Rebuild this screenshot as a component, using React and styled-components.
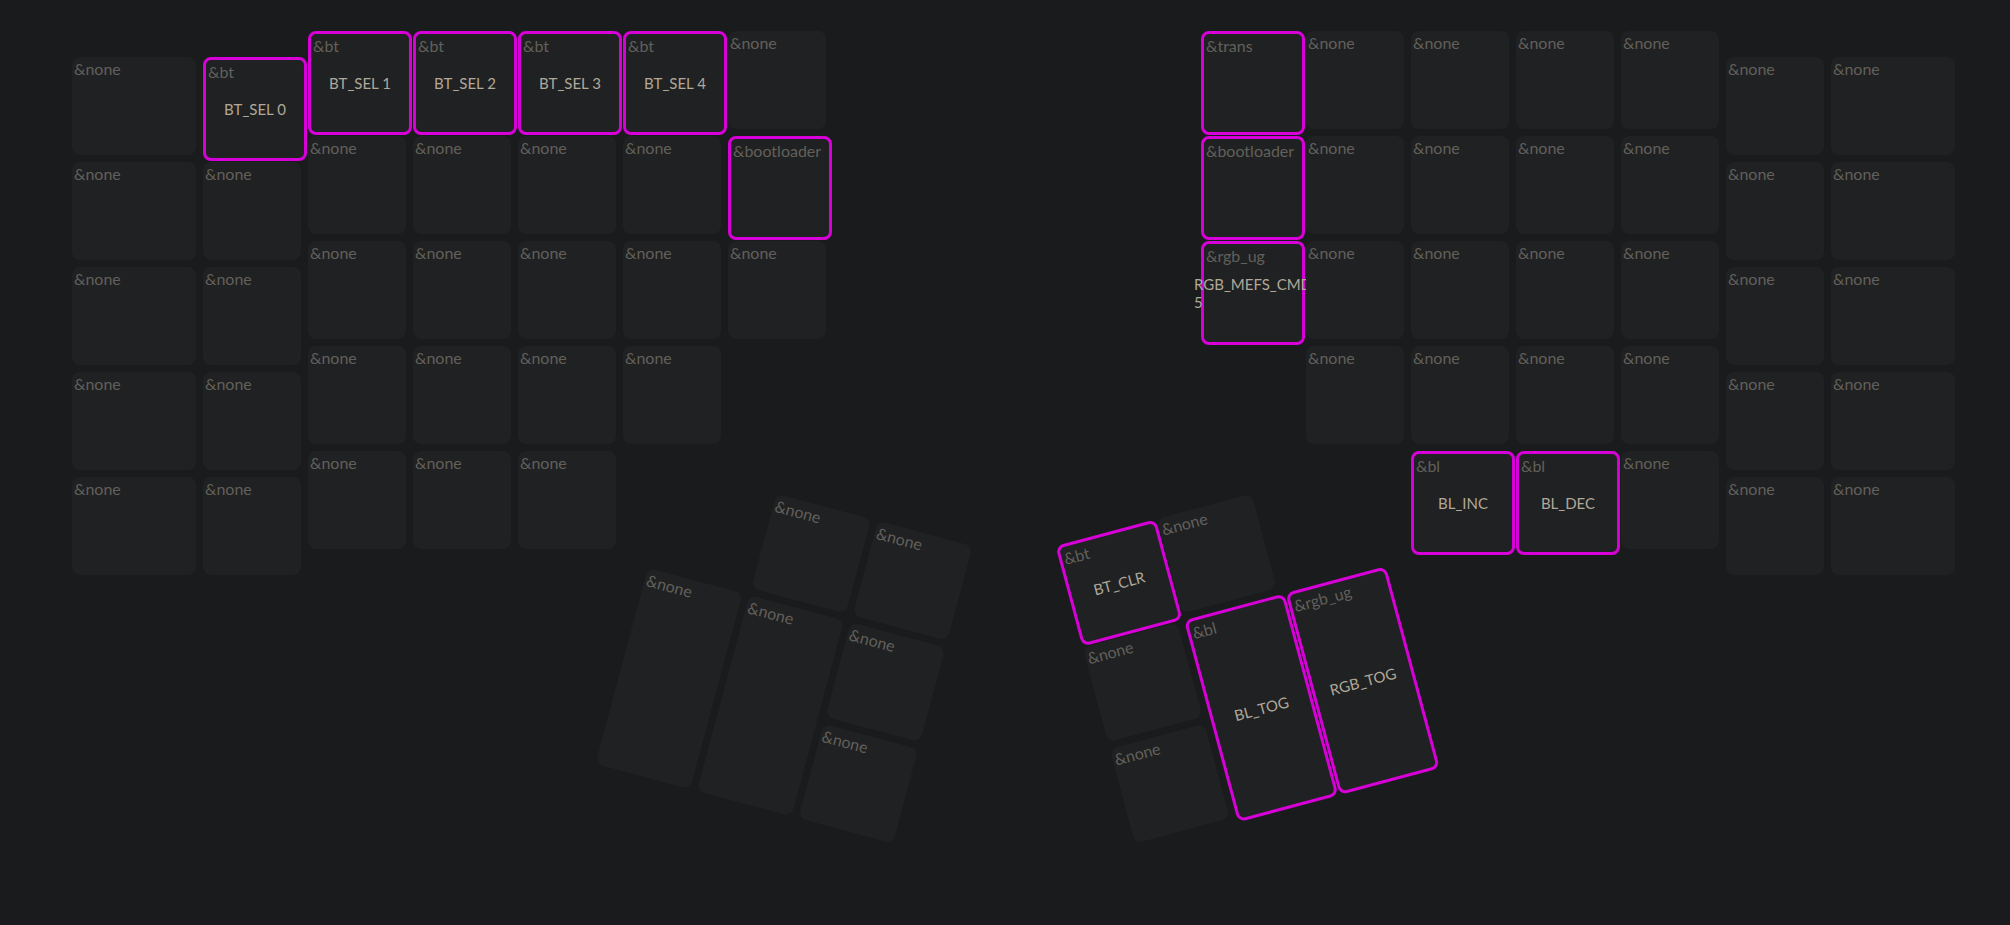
import React from "react";
import styled, { createGlobalStyle } from "styled-components";

const GlobalStyle = createGlobalStyle`
  body {
    margin: 0;
    background: #1a1b1c;
    color: #b0a898;
    font-family: Lato, "Open Sans", sans-serif;
  }
`;

const Page = styled.main`
  display: flex;
  justify-content: center;
  min-height: 100vh;
  box-sizing: border-box;
  padding: 31px 0 31px 17px;
`;

const Board = styled.div`
  display: flex;
  flex: 0 1 1883px;
`;

const Half = styled.section`
  flex: 1;
  display: grid;
  align-items: start;
  justify-items: ${(p) => (p.$side === "left" ? "start" : "end")};
`;

const Columns = styled.div`
  grid-area: 1 / 1;
  display: flex;
  gap: 7px;
`;

const Column = styled.div`
  display: flex;
  flex-direction: column;
  gap: 7px;
  width: ${(p) => (p.$wide ? 124 : 98)}px;
  padding-top: ${(p) => (p.$low ? 26 : 0)}px;
`;

const Cluster = styled.div`
  grid-area: 1 / 1;
  justify-self: ${(p) => (p.$side === "left" ? "end" : "start")};
  display: grid;
  grid-template-columns: repeat(3, 98px);
  grid-template-rows: repeat(3, 98px);
  gap: 7px;
  margin: 470px 76px 0;
  transform: rotate(${(p) => (p.$side === "left" ? 15 : -15)}deg);
`;

const Slot = styled.div`
  position: relative;
  display: grid;
  min-height: 98px;
  grid-area: ${(p) => p.$area || "auto"};
`;

const Cap = styled.button`
  display: grid;
  grid-template: minmax(0, 1fr) / minmax(0, 1fr);
  box-sizing: content-box;
  width: 100%;
  height: 100%;
  padding: 0;
  border: ${(p) => (p.$bound ? "3px solid #d800d8" : "0")};
  border-radius: 8px;
  background: #202122;
  color: inherit;
  font: inherit;
  text-align: left;
  cursor: pointer;
`;

const Behaviour = styled.span`
  grid-area: 1 / 1;
  place-self: start;
  padding: 2px;
  font-size: 16px;
  line-height: 20px;
  color: #62605b;
`;

const Value = styled.span`
  grid-area: 1 / 1;
  place-self: center;
  font-size: 15px;
  line-height: 18px;
`;

function Key({ binding = "none", value, area }) {
  return (
    <Slot $area={area}>
      <Cap type="button" $bound={binding !== "none"}>
        <Behaviour>&amp;{binding}</Behaviour>
        {value && <Value>{value}</Value>}
      </Cap>
    </Slot>
  );
}

const none = {};
const bt = (value) => ({ binding: "bt", value });

const leftColumns = [
  { wide: true, low: true, keys: [none, none, none, none, none] },
  { low: true, keys: [bt("BT_SEL 0"), none, none, none, none] },
  { keys: [bt("BT_SEL 1"), none, none, none, none] },
  { keys: [bt("BT_SEL 2"), none, none, none, none] },
  { keys: [bt("BT_SEL 3"), none, none, none, none] },
  { keys: [bt("BT_SEL 4"), none, none, none] },
  { keys: [none, { binding: "bootloader" }, none] },
];

const rightColumns = [
  {
    keys: [
      { binding: "trans" },
      { binding: "bootloader" },
      { binding: "rgb_ug", value: "RGB_MEFS_CMD 5" },
    ],
  },
  { keys: [none, none, none, none] },
  { keys: [none, none, none, none, { binding: "bl", value: "BL_INC" }] },
  { keys: [none, none, none, none, { binding: "bl", value: "BL_DEC" }] },
  { keys: [none, none, none, none, none] },
  { low: true, keys: [none, none, none, none, none] },
  { wide: true, low: true, keys: [none, none, none, none, none] },
];

const leftThumb = [
  { area: "1 / 2" },
  { area: "1 / 3" },
  { area: "2 / 1 / 4 / 2" },
  { area: "2 / 2 / 4 / 3" },
  { area: "2 / 3" },
  { area: "3 / 3" },
];

const rightThumb = [
  { area: "1 / 1", ...bt("BT_CLR") },
  { area: "1 / 2" },
  { area: "2 / 1" },
  { area: "3 / 1" },
  { area: "2 / 2 / 4 / 3", binding: "bl", value: "BL_TOG" },
  { area: "2 / 3 / 4 / 4", binding: "rgb_ug", value: "RGB_TOG" },
];

function KeyboardHalf({ side, columns, thumb }) {
  return (
    <Half $side={side} aria-label={`${side} half`}>
      <Columns>
        {columns.map((column, i) => (
          <Column key={i} $wide={column.wide} $low={column.low}>
            {column.keys.map((k, j) => (
              <Key key={j} {...k} />
            ))}
          </Column>
        ))}
      </Columns>
      <Cluster $side={side}>
        {thumb.map((k) => (
          <Key key={k.area} {...k} />
        ))}
      </Cluster>
    </Half>
  );
}

export default function App() {
  return (
    <>
      <GlobalStyle />
      <Page>
        <Board>
          <KeyboardHalf side="left" columns={leftColumns} thumb={leftThumb} />
          <KeyboardHalf side="right" columns={rightColumns} thumb={rightThumb} />
        </Board>
      </Page>
    </>
  );
}
